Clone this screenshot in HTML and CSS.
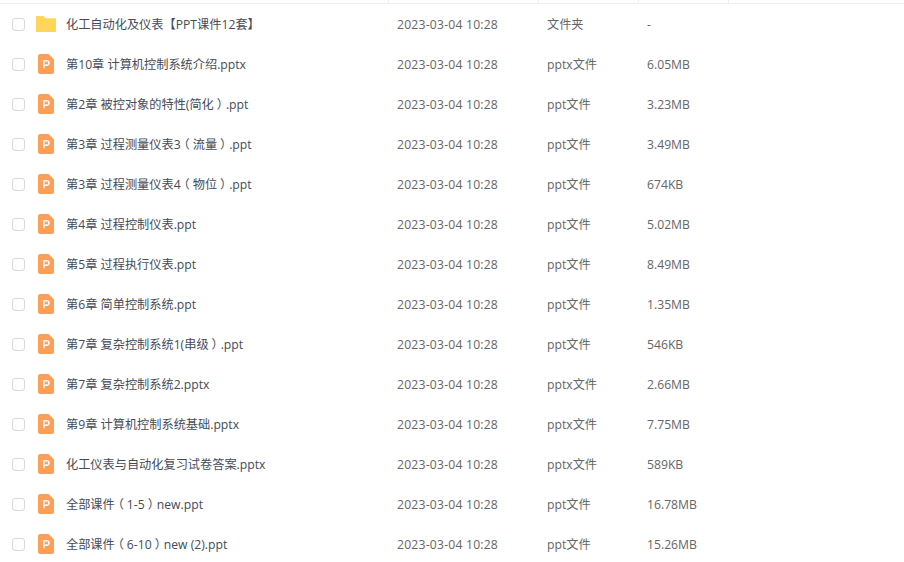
FILE: index.html
```html
<!DOCTYPE html>
<html lang="zh">
<head>
    <meta charset="UTF-8">
    <title>化工自动化及仪表</title>
    <link rel="stylesheet" href="styles.css">
</head>
<body>
    <svg class="sprites" width="0" height="0">
        <symbol id="ppt" viewBox="0 0 16 20">
            <path d="M2 0h8.5L16 5.5V18a2 2 0 0 1-2 2H2a2 2 0 0 1-2-2V2a2 2 0 0 1 2-2z" fill="#fd9f59"/>
            <path d="M6 14.2V6.8h2.8a2.2 2.2 0 0 1 0 4.4H6" fill="none" stroke="#fff" stroke-width="1.4"/>
        </symbol>
        <symbol id="folder" viewBox="0 0 20 16">
            <path d="M1 0h6.5l2 2.2H19a1 1 0 0 1 1 1V15a1 1 0 0 1-1 1H1a1 1 0 0 1-1-1V1a1 1 0 0 1 1-1z" fill="#ffd659"/>
        </symbol>
    </svg>
    <div class="head">
        <span class="head-col head-date"></span>
        <span class="head-col head-type"></span>
        <span class="head-col head-size"></span>
        <span class="head-col"></span>
    </div>
    <div class="row">
        <span class="check"></span>
        <svg class="icon-folder"><use href="#folder"/></svg>
        <span class="col-name">化工自动化及仪表【PPT课件12套】</span>
        <span class="col-date">2023-03-04 10:28</span>
        <span class="col-type">文件夹</span>
        <span class="col-size">-</span>
    </div>
    <div class="row">
        <span class="check"></span>
        <svg class="icon-ppt"><use href="#ppt"/></svg>
        <span class="col-name">第10章 计算机控制系统介绍.pptx</span>
        <span class="col-date">2023-03-04 10:28</span>
        <span class="col-type">pptx文件</span>
        <span class="col-size">6.05MB</span>
    </div>
    <div class="row">
        <span class="check"></span>
        <svg class="icon-ppt"><use href="#ppt"/></svg>
        <span class="col-name">第2章 被控对象的特性(简化<span class="fw">）</span>.ppt</span>
        <span class="col-date">2023-03-04 10:28</span>
        <span class="col-type">ppt文件</span>
        <span class="col-size">3.23MB</span>
    </div>
    <div class="row">
        <span class="check"></span>
        <svg class="icon-ppt"><use href="#ppt"/></svg>
        <span class="col-name">第3章 过程测量仪表3<span class="fw">（</span>流量<span class="fw">）</span>.ppt</span>
        <span class="col-date">2023-03-04 10:28</span>
        <span class="col-type">ppt文件</span>
        <span class="col-size">3.49MB</span>
    </div>
    <div class="row">
        <span class="check"></span>
        <svg class="icon-ppt"><use href="#ppt"/></svg>
        <span class="col-name">第3章 过程测量仪表4<span class="fw">（</span>物位<span class="fw">）</span>.ppt</span>
        <span class="col-date">2023-03-04 10:28</span>
        <span class="col-type">ppt文件</span>
        <span class="col-size">674KB</span>
    </div>
    <div class="row">
        <span class="check"></span>
        <svg class="icon-ppt"><use href="#ppt"/></svg>
        <span class="col-name">第4章 过程控制仪表.ppt</span>
        <span class="col-date">2023-03-04 10:28</span>
        <span class="col-type">ppt文件</span>
        <span class="col-size">5.02MB</span>
    </div>
    <div class="row">
        <span class="check"></span>
        <svg class="icon-ppt"><use href="#ppt"/></svg>
        <span class="col-name">第5章 过程执行仪表.ppt</span>
        <span class="col-date">2023-03-04 10:28</span>
        <span class="col-type">ppt文件</span>
        <span class="col-size">8.49MB</span>
    </div>
    <div class="row">
        <span class="check"></span>
        <svg class="icon-ppt"><use href="#ppt"/></svg>
        <span class="col-name">第6章 简单控制系统.ppt</span>
        <span class="col-date">2023-03-04 10:28</span>
        <span class="col-type">ppt文件</span>
        <span class="col-size">1.35MB</span>
    </div>
    <div class="row">
        <span class="check"></span>
        <svg class="icon-ppt"><use href="#ppt"/></svg>
        <span class="col-name">第7章 复杂控制系统1(串级<span class="fw">）</span>.ppt</span>
        <span class="col-date">2023-03-04 10:28</span>
        <span class="col-type">ppt文件</span>
        <span class="col-size">546KB</span>
    </div>
    <div class="row">
        <span class="check"></span>
        <svg class="icon-ppt"><use href="#ppt"/></svg>
        <span class="col-name">第7章 复杂控制系统2.pptx</span>
        <span class="col-date">2023-03-04 10:28</span>
        <span class="col-type">pptx文件</span>
        <span class="col-size">2.66MB</span>
    </div>
    <div class="row">
        <span class="check"></span>
        <svg class="icon-ppt"><use href="#ppt"/></svg>
        <span class="col-name">第9章 计算机控制系统基础.pptx</span>
        <span class="col-date">2023-03-04 10:28</span>
        <span class="col-type">pptx文件</span>
        <span class="col-size">7.75MB</span>
    </div>
    <div class="row">
        <span class="check"></span>
        <svg class="icon-ppt"><use href="#ppt"/></svg>
        <span class="col-name">化工仪表与自动化复习试卷答案.pptx</span>
        <span class="col-date">2023-03-04 10:28</span>
        <span class="col-type">pptx文件</span>
        <span class="col-size">589KB</span>
    </div>
    <div class="row">
        <span class="check"></span>
        <svg class="icon-ppt"><use href="#ppt"/></svg>
        <span class="col-name">全部课件<span class="fw">（</span>1-5<span class="fw">）</span>new.ppt</span>
        <span class="col-date">2023-03-04 10:28</span>
        <span class="col-type">ppt文件</span>
        <span class="col-size">16.78MB</span>
    </div>
    <div class="row">
        <span class="check"></span>
        <svg class="icon-ppt"><use href="#ppt"/></svg>
        <span class="col-name">全部课件<span class="fw">（</span>6-10<span class="fw">）</span>new (2).ppt</span>
        <span class="col-date">2023-03-04 10:28</span>
        <span class="col-type">ppt文件</span>
        <span class="col-size">15.26MB</span>
    </div>
</body>
</html>
```

FILE: styles.css
```css
html, body {
    overflow: hidden;
}
body {
    margin: 0;
    padding: 0;
    background: #fff;
    font-family: "Open Sans", "Noto Sans CJK SC", sans-serif;
    font-size: 12.2px;
    color: #666;
}
.sprites {
    position: absolute;
}
.head {
    display: flex;
    height: 3px;
    padding-left: 388px;
    border-bottom: 1px solid #efefef;
}
.head-col {
    border-left: 1px solid #efefef;
}
.head-date {
    width: 149px;
}
.head-type {
    width: 99px;
}
.head-size {
    width: 89px;
}
.row {
    display: flex;
    align-items: center;
    height: 40px;
    line-height: 20px;
}
.check {
    flex: none;
    width: 11px;
    height: 11px;
    margin-left: 12px;
    border: 1px solid #d9d9d9;
    border-radius: 3px;
}
.icon-folder {
    flex: none;
    width: 20px;
    height: 16px;
    margin-left: 11px;
    margin-right: 10px;
}
.icon-ppt {
    flex: none;
    width: 16px;
    height: 20px;
    margin-left: 13px;
    margin-right: 12px;
}
.col-name, .col-date, .col-type, .col-size {
    padding-top: 2px;
}
.col-name {
    width: 331px;
    color: #454b57;
}
/* full width brackets sit centred in their box on the original font */
.fw {
    font-feature-settings: "halt";
    padding: 0 3px;
}
.col-date {
    width: 150px;
    letter-spacing: 0.2px;
}
.col-type {
    width: 100px;
}
.col-size {
    width: 80px;
}
```
